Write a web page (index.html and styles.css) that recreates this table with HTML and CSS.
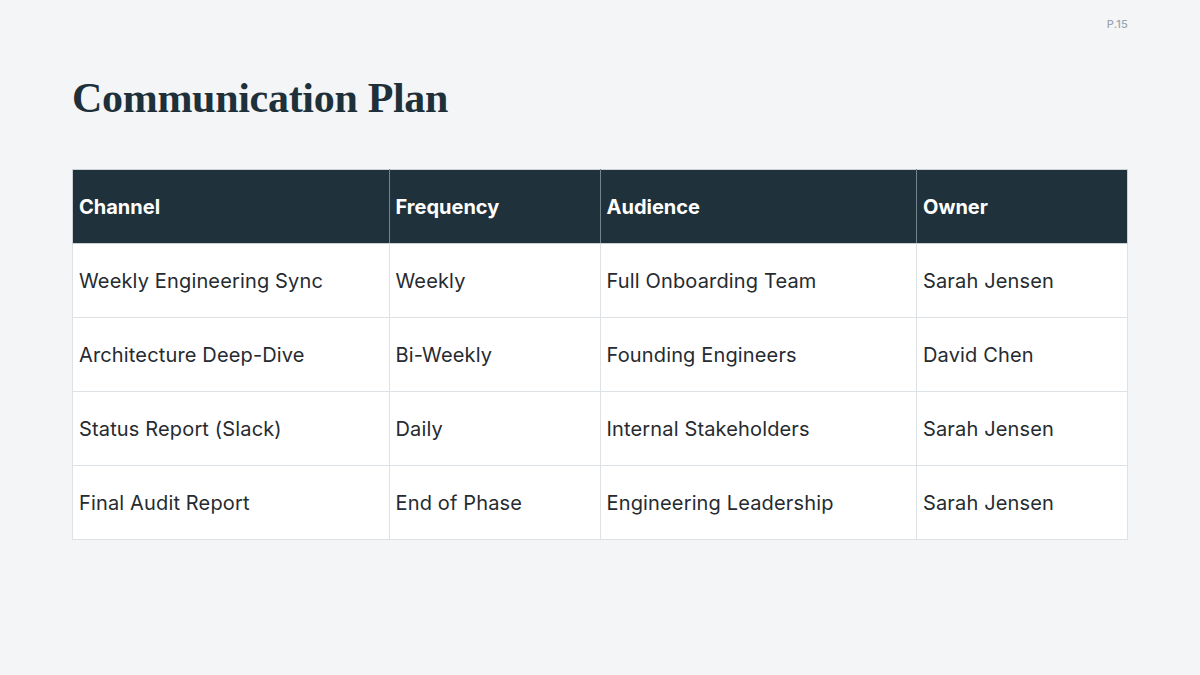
FILE: index.html
```html
<!DOCTYPE html>
<html lang="en">
<head>
<meta charset="utf-8">
<title>Communication Plan</title>
<link rel="stylesheet" href="styles.css">
</head>
<body>
<div class="slide">
  <div class="page-num">P.15</div>
  <h1 class="title">Communication Plan</h1>
  <table class="plan">
    <colgroup>
      <col class="c-wide"><col class="c-narrow"><col class="c-wide"><col class="c-narrow">
    </colgroup>
    <thead>
      <tr><th>Channel</th><th>Frequency</th><th>Audience</th><th>Owner</th></tr>
    </thead>
    <tbody>
      <tr><td>Weekly Engineering Sync</td><td>Weekly</td><td>Full Onboarding Team</td><td>Sarah Jensen</td></tr>
      <tr><td>Architecture Deep-Dive</td><td>Bi-Weekly</td><td>Founding Engineers</td><td>David Chen</td></tr>
      <tr><td>Status Report (Slack)</td><td>Daily</td><td>Internal Stakeholders</td><td>Sarah Jensen</td></tr>
      <tr><td>Final Audit Report</td><td>End of Phase</td><td>Engineering Leadership</td><td>Sarah Jensen</td></tr>
    </tbody>
  </table>
</div>
</body>
</html>
```
FILE: styles.css
```css
html, body {
  margin: 0;
  padding: 0;
  background: #f4f5f7;
}
.slide {
  position: relative;
  width: 1200px;
  height: 675px;
  box-sizing: border-box;
  padding: 70px 72px 0 72px;
  font-family: Inter, "Noto Sans", sans-serif;
}
.page-num {
  position: absolute;
  top: 17px;
  right: 72px;
  font-size: 11px;
  font-weight: 500;
  color: #9ba6b2;
  letter-spacing: 0.2px;
}
.title {
  margin: 0;
  font-family: "Liberation Serif", "DejaVu Serif", serif;
  font-weight: 700;
  font-size: 42px;
  line-height: 56px;
  color: #1e313b;
  letter-spacing: -0.3px;
}
.plan {
  margin-top: 43px;
  width: 1056px;
  border-collapse: collapse;
  table-layout: fixed;
  background: #ffffff;
}
.c-wide { width: 30%; }
.c-narrow { width: 20%; }
.plan th, .plan td {
  height: 74px;
  padding: 0 6px;
  text-align: left;
  vertical-align: middle;
  font-size: 20px;
  box-sizing: border-box;
}
.plan th {
  background: #1f323c;
  color: #ffffff;
  font-weight: 700;
  border: 1px solid #74858f;
  border-top-color: #c9d0d6;
  border-bottom-color: #c9d0d6;
}
.plan th:first-child { border-left-color: #c9d0d6; }
.plan th:last-child { border-right-color: #c9d0d6; }
.plan td {
  color: #262b30;
  font-weight: 400;
  letter-spacing: 0.15px;
  border: 1px solid #dde2e7;
}
```
